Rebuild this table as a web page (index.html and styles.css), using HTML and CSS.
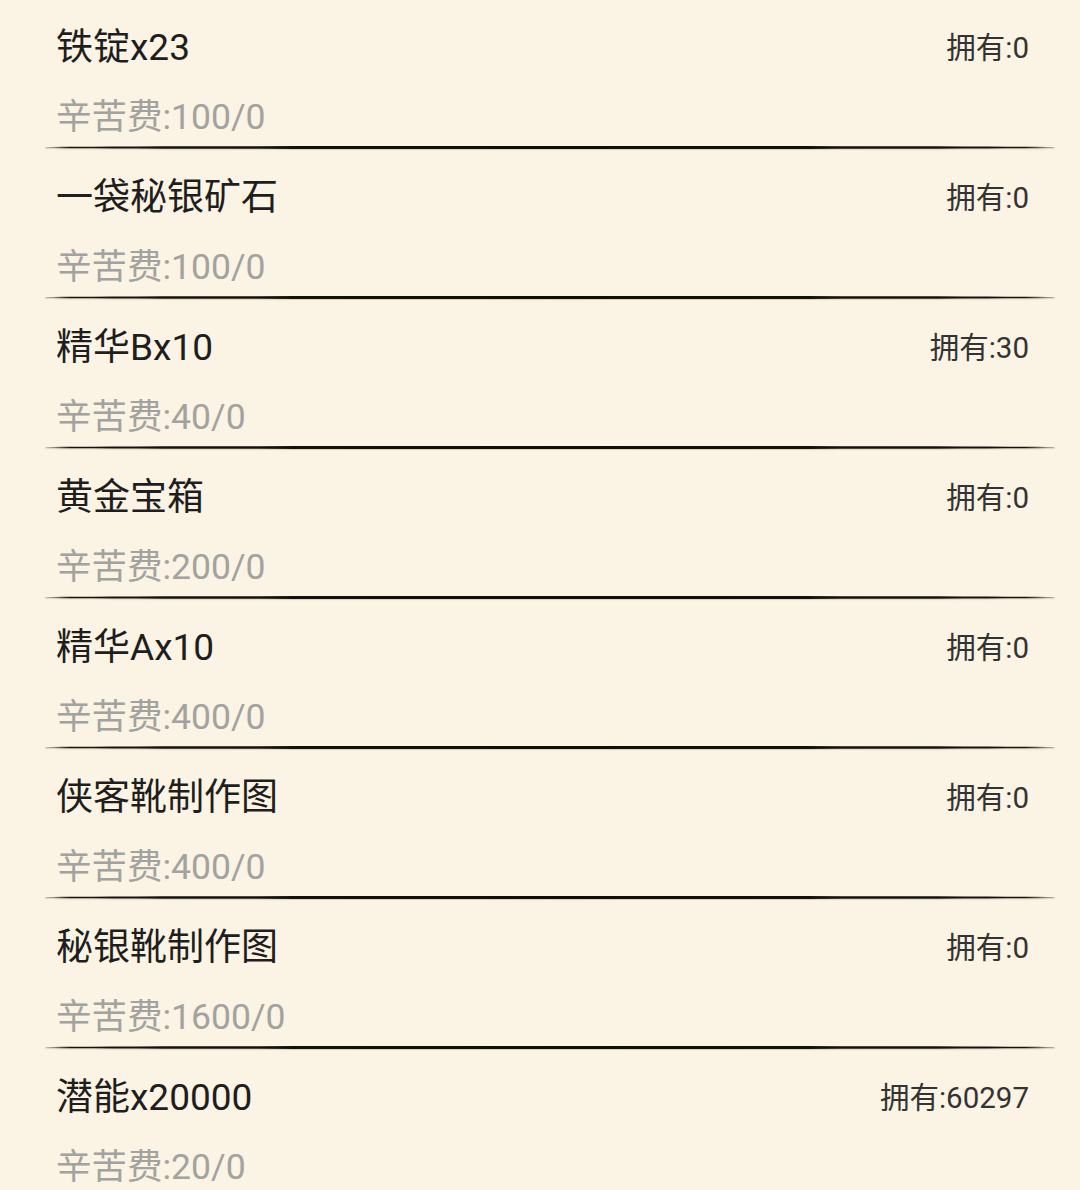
FILE: index.html
```html
<!DOCTYPE html>
<html lang="zh-CN">
<head>
<meta charset="utf-8">
<title>兑换列表</title>
<link rel="stylesheet" href="styles.css">
</head>
<body>
<div class="list">
  <div class="divider divider-top"></div>

  <div class="item">
    <div class="row"><span class="title">铁锭x23</span><span class="own">拥有:0</span></div>
    <div class="fee">辛苦费:100/0</div>
  </div>
  <div class="divider"></div>

  <div class="item">
    <div class="row"><span class="title">一袋秘银矿石</span><span class="own">拥有:0</span></div>
    <div class="fee">辛苦费:100/0</div>
  </div>
  <div class="divider"></div>

  <div class="item">
    <div class="row"><span class="title">精华Bx10</span><span class="own">拥有:30</span></div>
    <div class="fee">辛苦费:40/0</div>
  </div>
  <div class="divider"></div>

  <div class="item">
    <div class="row"><span class="title">黄金宝箱</span><span class="own">拥有:0</span></div>
    <div class="fee">辛苦费:200/0</div>
  </div>
  <div class="divider"></div>

  <div class="item">
    <div class="row"><span class="title">精华Ax10</span><span class="own">拥有:0</span></div>
    <div class="fee">辛苦费:400/0</div>
  </div>
  <div class="divider"></div>

  <div class="item">
    <div class="row"><span class="title">侠客靴制作图</span><span class="own">拥有:0</span></div>
    <div class="fee">辛苦费:400/0</div>
  </div>
  <div class="divider"></div>

  <div class="item">
    <div class="row"><span class="title">秘银靴制作图</span><span class="own">拥有:0</span></div>
    <div class="fee">辛苦费:1600/0</div>
  </div>
  <div class="divider"></div>

  <div class="item">
    <div class="row"><span class="title">潜能x20000</span><span class="own">拥有:60297</span></div>
    <div class="fee">辛苦费:20/0</div>
  </div>
  <div class="divider"></div>
</div>
</body>
</html>
```

FILE: styles.css
```css
html, body {
  margin: 0;
  padding: 0;
  background: #fbf3e3;
}

body {
  width: 1080px;
  height: 1190px;
  overflow: hidden;
  font-family: Roboto, "Noto Sans CJK SC", sans-serif;
}

.list {
  display: flex;
  flex-direction: column;
  margin-top: -4px;
}

.item {
  height: 147px;
  box-sizing: border-box;
  padding: 24px 51px 0 56px;
  display: flex;
  flex-direction: column;
}

.row {
  display: flex;
  justify-content: space-between;
  align-items: center;
  height: 50px;
}

.title {
  font-size: 37px;
  line-height: 50px;
  color: #1e1e1e;
}

.own {
  font-size: 29.5px;
  line-height: 50px;
  color: #333333;
}

.fee {
  margin-top: 22px;
  font-size: 35.5px;
  line-height: 44px;
  color: #a2a2a0;
}

.divider {
  height: 3px;
  margin: 0 25px 0 45px;
  border-radius: 40%;
  background: linear-gradient(90deg,
    rgba(20, 18, 12, 0.2) 0%,
    #15130e 2.5%,
    #100e0a 50%,
    #15130e 97%,
    rgba(20, 18, 12, 0.25) 100%);
  box-shadow: 0 1px 1px rgba(140, 130, 110, 0.3);
}

.divider-top {
  opacity: 0.2;
}
```
